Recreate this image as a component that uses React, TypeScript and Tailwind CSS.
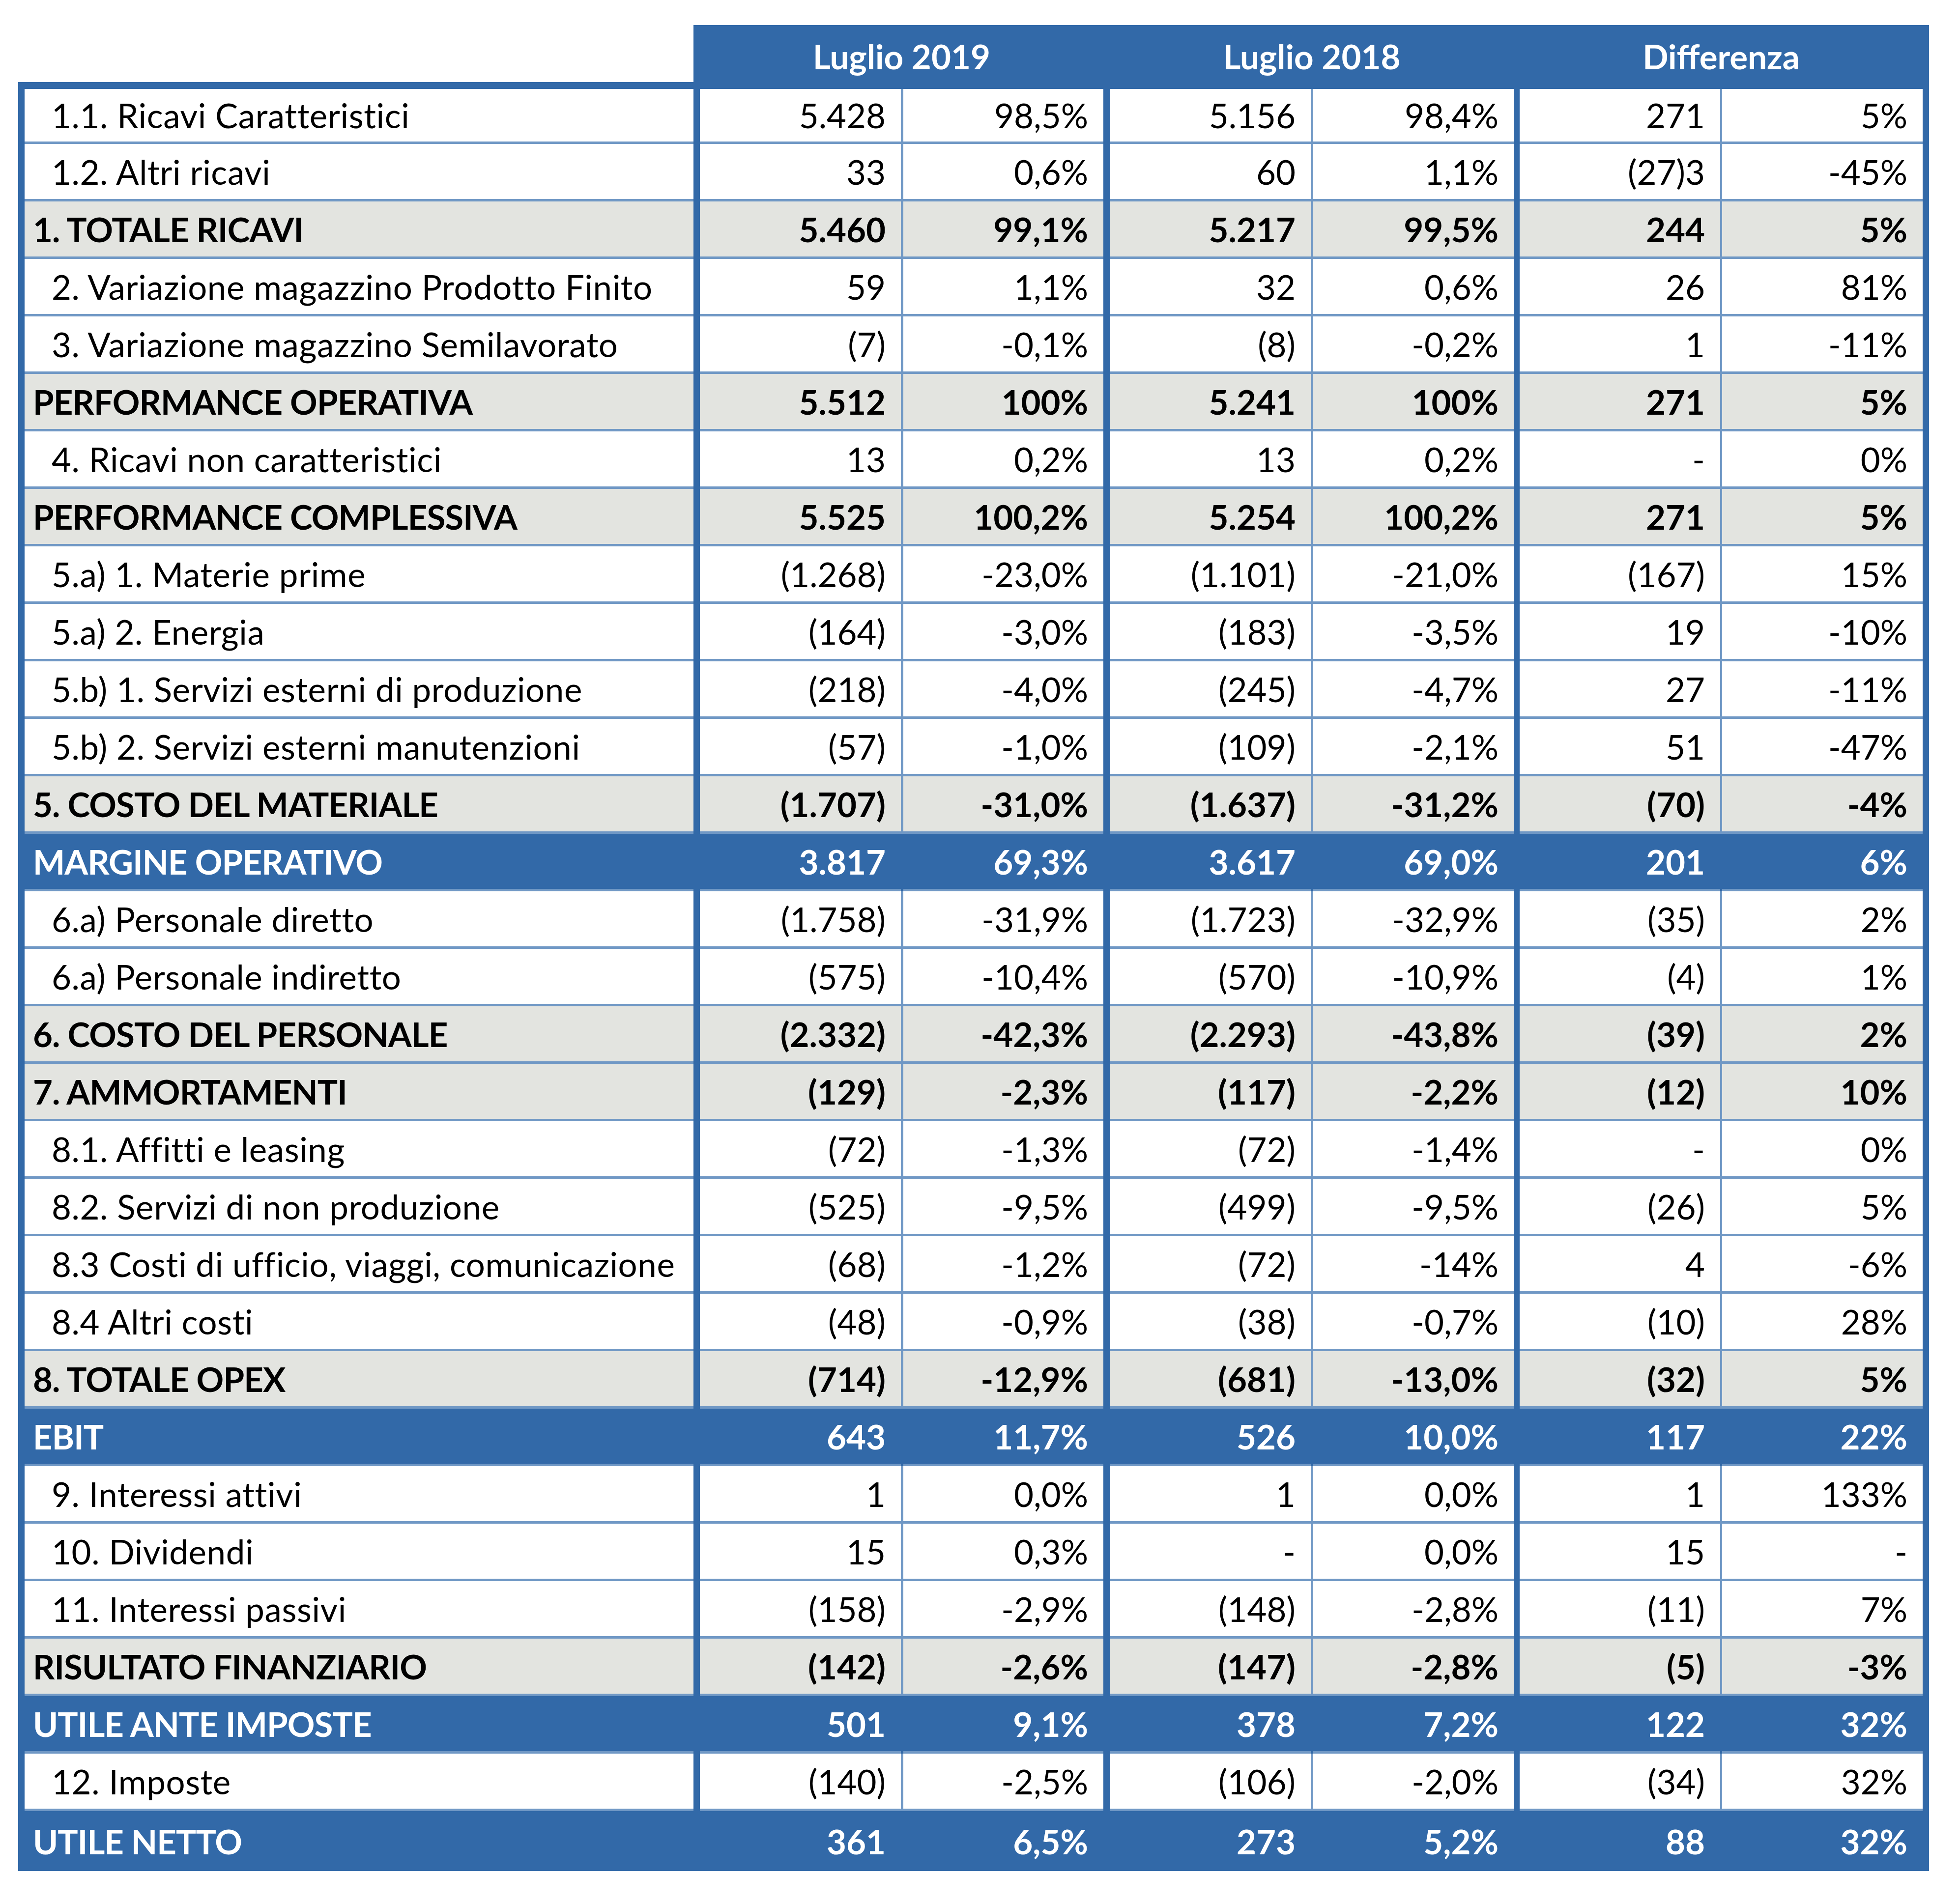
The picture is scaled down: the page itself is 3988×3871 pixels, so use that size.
type Kind = "item" | "total" | "key";

interface Row {
  label: string;
  kind: Kind;
  values: string[];
}

const rows: Row[] = [
  { label: "1.1. Ricavi Caratteristici", kind: "item", values: ["5.428", "98,5%", "5.156", "98,4%", "271", "5%"] },
  { label: "1.2. Altri ricavi", kind: "item", values: ["33", "0,6%", "60", "1,1%", "(27)3", "-45%"] },
  { label: "1. TOTALE RICAVI", kind: "total", values: ["5.460", "99,1%", "5.217", "99,5%", "244", "5%"] },
  { label: "2. Variazione magazzino Prodotto Finito", kind: "item", values: ["59", "1,1%", "32", "0,6%", "26", "81%"] },
  { label: "3. Variazione magazzino Semilavorato", kind: "item", values: ["(7)", "-0,1%", "(8)", "-0,2%", "1", "-11%"] },
  { label: "PERFORMANCE OPERATIVA", kind: "total", values: ["5.512", "100%", "5.241", "100%", "271", "5%"] },
  { label: "4. Ricavi non caratteristici", kind: "item", values: ["13", "0,2%", "13", "0,2%", "-", "0%"] },
  { label: "PERFORMANCE COMPLESSIVA", kind: "total", values: ["5.525", "100,2%", "5.254", "100,2%", "271", "5%"] },
  { label: "5.a) 1. Materie prime", kind: "item", values: ["(1.268)", "-23,0%", "(1.101)", "-21,0%", "(167)", "15%"] },
  { label: "5.a) 2. Energia", kind: "item", values: ["(164)", "-3,0%", "(183)", "-3,5%", "19", "-10%"] },
  { label: "5.b) 1. Servizi esterni di produzione", kind: "item", values: ["(218)", "-4,0%", "(245)", "-4,7%", "27", "-11%"] },
  { label: "5.b) 2. Servizi esterni manutenzioni", kind: "item", values: ["(57)", "-1,0%", "(109)", "-2,1%", "51", "-47%"] },
  { label: "5. COSTO DEL MATERIALE", kind: "total", values: ["(1.707)", "-31,0%", "(1.637)", "-31,2%", "(70)", "-4%"] },
  { label: "MARGINE OPERATIVO", kind: "key", values: ["3.817", "69,3%", "3.617", "69,0%", "201", "6%"] },
  { label: "6.a) Personale diretto", kind: "item", values: ["(1.758)", "-31,9%", "(1.723)", "-32,9%", "(35)", "2%"] },
  { label: "6.a) Personale indiretto", kind: "item", values: ["(575)", "-10,4%", "(570)", "-10,9%", "(4)", "1%"] },
  { label: "6. COSTO DEL PERSONALE", kind: "total", values: ["(2.332)", "-42,3%", "(2.293)", "-43,8%", "(39)", "2%"] },
  { label: "7. AMMORTAMENTI", kind: "total", values: ["(129)", "-2,3%", "(117)", "-2,2%", "(12)", "10%"] },
  { label: "8.1. Affitti e leasing", kind: "item", values: ["(72)", "-1,3%", "(72)", "-1,4%", "-", "0%"] },
  { label: "8.2. Servizi di non produzione", kind: "item", values: ["(525)", "-9,5%", "(499)", "-9,5%", "(26)", "5%"] },
  { label: "8.3 Costi di ufficio, viaggi, comunicazione", kind: "item", values: ["(68)", "-1,2%", "(72)", "-14%", "4", "-6%"] },
  { label: "8.4 Altri costi", kind: "item", values: ["(48)", "-0,9%", "(38)", "-0,7%", "(10)", "28%"] },
  { label: "8. TOTALE OPEX", kind: "total", values: ["(714)", "-12,9%", "(681)", "-13,0%", "(32)", "5%"] },
  { label: "EBIT", kind: "key", values: ["643", "11,7%", "526", "10,0%", "117", "22%"] },
  { label: "9. Interessi attivi", kind: "item", values: ["1", "0,0%", "1", "0,0%", "1", "133%"] },
  { label: "10. Dividendi", kind: "item", values: ["15", "0,3%", "-", "0,0%", "15", "-"] },
  { label: "11. Interessi passivi", kind: "item", values: ["(158)", "-2,9%", "(148)", "-2,8%", "(11)", "7%"] },
  { label: "RISULTATO FINANZIARIO", kind: "total", values: ["(142)", "-2,6%", "(147)", "-2,8%", "(5)", "-3%"] },
  { label: "UTILE ANTE IMPOSTE", kind: "key", values: ["501", "9,1%", "378", "7,2%", "122", "32%"] },
  { label: "12. Imposte", kind: "item", values: ["(140)", "-2,5%", "(106)", "-2,0%", "(34)", "32%"] },
  { label: "UTILE NETTO", kind: "key", values: ["361", "6,5%", "273", "5,2%", "88", "32%"] },
];

// width of each value cell, then the rule that follows it
const columns = [
  { cell: "w-[409px]", rule: "w-[5px]", thick: false },
  { cell: "w-[407px]", rule: "w-[13px]", thick: true },
  { cell: "w-[409px]", rule: "w-[4px]", thick: false },
  { cell: "w-[409px]", rule: "w-[12px]", thick: true },
  { cell: "w-[408px]", rule: "w-[4px]", thick: false },
  { cell: "w-[408px]", rule: "w-[13px]", thick: true },
];

const TableRow = ({ row, first, last }: { row: Row; first: boolean; last: boolean }) => {
  const isKey = row.kind === "key";
  const isItem = row.kind === "item";

  const height = last ? "h-[122px]" : first ? "h-[112px]" : "h-[117px]";
  const fill = isKey
    ? "bg-[#3269a8] text-white font-bold"
    : row.kind === "total"
      ? "bg-[#e3e4e0] text-black font-bold"
      : "bg-white text-black";
  const sep = last ? "" : "border-b-[5px] border-[#7098c5]";
  const thinRule = isKey ? "bg-[#3269a8]" : "bg-[#7098c5]";

  return (
    <div className={`flex ${height}`}>
      <div className="w-[13px] bg-[#3269a8]"></div>
      <div
        className={`w-[1361px] flex items-center ${fill} ${sep} ${
          isItem ? "pl-[55px] tracking-[0.6px]" : "pl-[17px] tracking-[-0.9px]"
        }`}
      >
        {row.label}
      </div>
      <div className="w-[13px] bg-[#3269a8]"></div>
      {columns.map((col, i) => (
        <div key={i} className="flex">
          <div className={`${col.cell} flex items-center justify-end pr-[31px] ${fill} ${sep}`}>
            {row.values[i]}
          </div>
          <div className={`${col.rule} ${col.thick ? "bg-[#3269a8]" : thinRule}`}></div>
        </div>
      ))}
    </div>
  );
};

const App = () => {
  return (
    <div className="w-[3988px] h-[3871px] bg-white pt-[51px] pl-[37px] font-['Lato',sans-serif] text-[69px] leading-none">
      <div className="w-[3888px]">
        <div className="flex h-[130px]">
          <div className="w-[1374px] flex flex-col">
            <div className="flex-1 bg-white"></div>
            <div className="h-[14px] bg-[#3269a8]"></div>
          </div>
          <div className="flex-1 flex bg-[#3269a8] text-white font-bold pb-[4px]">
            <div className="w-[13px]"></div>
            <div className="w-[821px] flex items-center justify-center">Luglio 2019</div>
            <div className="w-[13px]"></div>
            <div className="w-[822px] flex items-center justify-center">Luglio 2018</div>
            <div className="w-[12px]"></div>
            <div className="w-[820px] flex items-center justify-center">Differenza</div>
            <div className="w-[13px]"></div>
          </div>
        </div>
        {rows.map((row, i) => (
          <TableRow key={row.label} row={row} first={i === 0} last={i === rows.length - 1} />
        ))}
      </div>
    </div>
  );
};

export default App;
